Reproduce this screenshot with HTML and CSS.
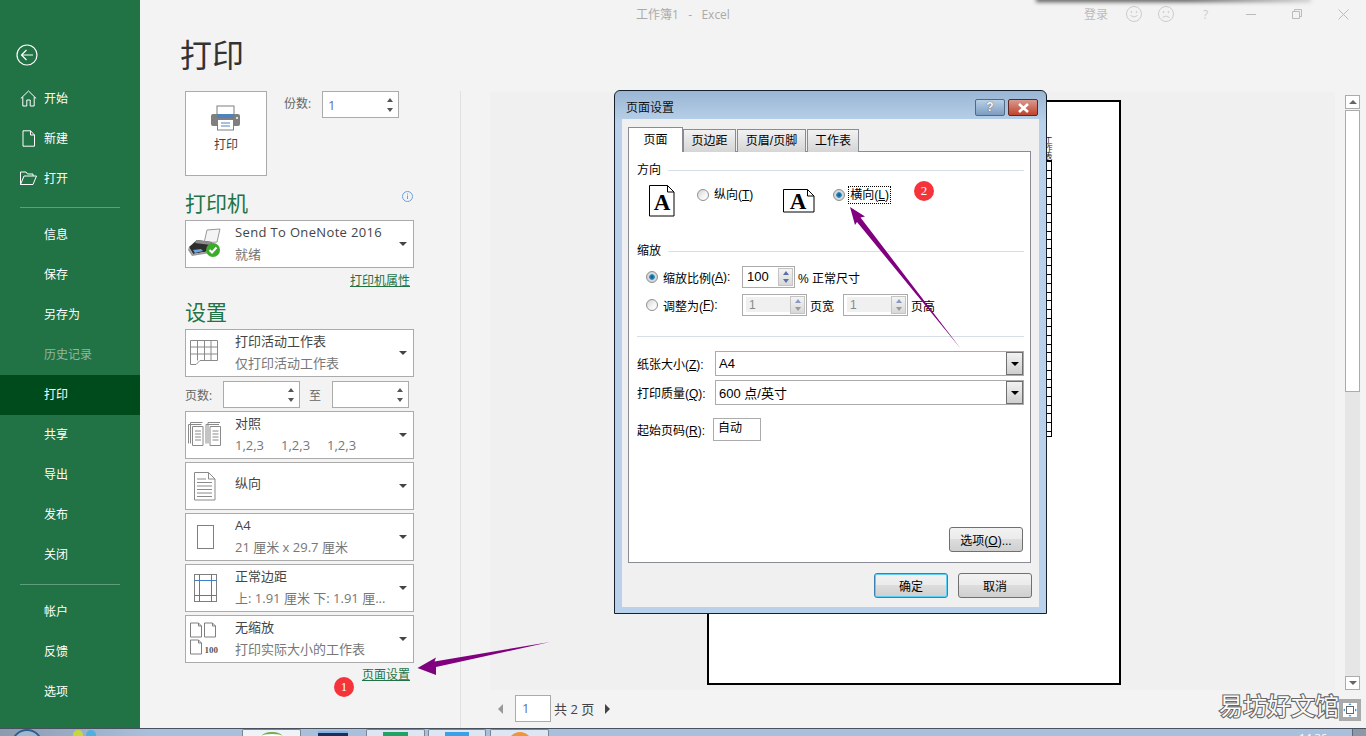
FILE: index.html
```html
<!DOCTYPE html>
<html lang="zh-CN">
<head>
<meta charset="UTF-8">
<title>工作簿1 - Excel</title>
<link rel="stylesheet" href="styles.css">
</head>
<body>
<div id="app">
    <nav class="sidebar">
        <div class="back">
            <svg width="24" height="24" viewBox="0 0 24 24" fill="none" stroke="#fff" stroke-width="1.2"><circle cx="12" cy="12" r="10"/><path d="M18 12H6.500M11.500 7l-5 5 5 5"/></svg>
        </div>
        <a class="nav-item">
            <svg class="nav-icon" width="17" height="17" viewBox="0 0 17 17" fill="none" stroke="#fff" stroke-width="1"><path d="M.8 8.500L8.500 1l7.700 7.500M2.800 7v9h4v-6h3.400v6h4V7"/></svg>
            开始
        </a>
        <a class="nav-item">
            <svg class="nav-icon" width="17" height="17" viewBox="0 0 17 17" fill="none" stroke="#fff" stroke-width="1"><path d="M3 .8h7.500L14.500 5v11.200H3zM10.500 .8V5h4"/></svg>
            新建
        </a>
        <a class="nav-item">
            <svg class="nav-icon" width="17" height="17" viewBox="0 0 17 17" fill="none" stroke="#fff" stroke-width="1"><path d="M.5 14.500V2h5.500l1.500 2h5.500v2M.5 14.500L4 6h12.500L13 14.500z"/></svg>
            打开
        </a>
        <div class="nav-line nav-line-first"></div>
        <a class="nav-item">信息</a>
        <a class="nav-item">保存</a>
        <a class="nav-item">另存为</a>
        <a class="nav-item nav-off">历史记录</a>
        <a class="nav-item nav-on">打印</a>
        <a class="nav-item">共享</a>
        <a class="nav-item">导出</a>
        <a class="nav-item">发布</a>
        <a class="nav-item">关闭</a>
        <div class="nav-line nav-line-second"></div>
        <a class="nav-item">帐户</a>
        <a class="nav-item">反馈</a>
        <a class="nav-item">选项</a>
    </nav>

    <main class="main">
        <header class="titlebar">
            <span class="app-title">工作簿1&nbsp;&nbsp; - &nbsp;&nbsp;Excel</span>
            <span class="login">登录</span>
            <svg class="tb-smile" width="16" height="16" viewBox="0 0 16 16" fill="none" stroke="#ccc"><circle cx="8" cy="8" r="7.500"/><circle cx="5.500" cy="6" r=".6"/><circle cx="10.500" cy="6" r=".6"/><path d="M4.500 9.500q3.500 3 7 0"/></svg>
            <svg class="tb-sad" width="16" height="16" viewBox="0 0 16 16" fill="none" stroke="#ccc"><circle cx="8" cy="8" r="7.500"/><circle cx="5.500" cy="6" r=".6"/><circle cx="10.500" cy="6" r=".6"/><path d="M4.500 11.500q3.500-3 7 0"/></svg>
            <span class="tb-help">?</span>
            <svg class="tb-min" width="10" height="10" viewBox="0 0 10 10" stroke="#bbb"><path d="M0 5.500h10"/></svg>
            <svg class="tb-restore" width="10" height="10" viewBox="0 0 10 10" fill="none" stroke="#bbb"><path d="M.5 2.500h7v7h-7zM2.500 2.500v-2h7v7h-2"/></svg>
            <svg class="tb-close" width="11" height="11" viewBox="0 0 11 11" stroke="#bbb"><path d="M.5 .5l10 10M10.500 .5l-10 10"/></svg>
        </header>
        <h1 class="page-title">打印</h1>

        <div class="content">
            <section class="settings">
                <div class="print-row">
                    <button class="print-btn">
                        <svg width="30" height="26" viewBox="0 0 30 26"><rect x="6" y="1" width="17" height="10" fill="#fff" stroke="#7f7f7f"/><rect x="0" y="9" width="29" height="12" rx="2" fill="#7f7f7f"/><rect x="6" y="9" width="17" height="4" fill="#4f81bd"/><circle cx="26" cy="13" r="1" fill="#fff"/><rect x="6.500" y="14.500" width="16" height="10.500" fill="#fff" stroke="#7f7f7f"/><path d="M10 18h9M10 21h9" stroke="#4f81bd"/></svg>
                        <span>打印</span>
                    </button>
                    <span class="copies-label">份数:</span>
                    <div class="num-input copies"><span class="num-value">1</span><span class="num-arrows"><i class="up"></i><i class="down"></i></span></div>
                </div>

                <div class="heading heading-printer">
                    <span>打印机</span>
                    <svg class="info" width="11" height="11" viewBox="0 0 11 11" fill="none" stroke="#6f9fd8"><circle cx="5.500" cy="5.500" r="5"/><path d="M5.500 4.500v3.500M5.500 2.500v1"/></svg>
                </div>
                <div class="drop">
                    <div class="drop-icon">
                        <svg width="34" height="34" viewBox="0 0 34 34"><path d="M19 3l13-1-3 13-13 1z" fill="#f4f4f4" stroke="#999"/><path d="M1 20l8-7 15 2-2 9-17 3z" fill="#2e2e2e"/><path d="M9 13l15 2-1 3-16-2z" fill="#8c8c8c"/><path d="M1 20l4 7 17-3 0 2-18 3-4-6z" fill="#9a9a9a"/><path d="M5 23l8-1 2 2-8 2z" fill="#6aa7de"/><circle cx="25" cy="23" r="7" fill="#3cab2c"/><path d="M21.500 23l2.500 2.500 4.500-5" fill="none" stroke="#fff" stroke-width="2"/></svg>
                    </div>
                    <div class="drop-text"><div class="drop-main drop-latin">Send To OneNote 2016</div><div class="drop-sub">就绪</div></div>
                    <i class="caret"></i>
                </div>
                <div class="link-row link-printer"><a>打印机属性</a></div>

                <div class="heading heading-settings"><span>设置</span></div>
                <div class="drop">
                    <div class="drop-icon">
                        <svg width="30" height="26" viewBox="0 0 30 26" fill="none" stroke="#8a8a8a"><path d="M.5 .5h27v20H10l-4 4H.5zM.5 7h27M.5 14h27M7.500 .5v20M14.500 .5v20M21 .5v20"/></svg>
                    </div>
                    <div class="drop-text"><div class="drop-main">打印活动工作表</div><div class="drop-sub">仅打印活动工作表</div></div>
                    <i class="caret"></i>
                </div>
                <div class="pages-row">
                    <span class="pages-label">页数:</span>
                    <div class="num-input"><span class="num-arrows"><i class="up"></i><i class="down"></i></span></div>
                    <span class="pages-to">至</span>
                    <div class="num-input"><span class="num-arrows"><i class="up"></i><i class="down"></i></span></div>
                </div>
                <div class="drop drop-gap">
                    <div class="drop-icon">
                        <svg width="34" height="26" viewBox="0 0 34 26" fill="none" stroke="#8a8a8a"><path d="M.5 2.500h13M.5 2.500v19M2.500 .5h12M2.500 .5v21M4.500 4.500h10.500v19H4.500zM7 9h6M7 12h6M7 15h6M7 18h6"/><path d="M18 2.500h13M18 2.500v19M20 .5h12M20 .5v21M22 4.500h10.500v19H22zM24.500 9h6M24.500 12h6M24.500 15h6M24.500 18h6"/></svg>
                    </div>
                    <div class="drop-text"><div class="drop-main">对照</div><div class="drop-sub collate"><span>1,2,3</span><span>1,2,3</span><span>1,2,3</span></div></div>
                    <i class="caret"></i>
                </div>
                <div class="drop drop-gap">
                    <div class="drop-icon">
                        <svg width="22" height="29" viewBox="0 0 22 29" fill="none" stroke="#8a8a8a"><path d="M.5 .5h14l6.500 6.500v21H.5zM14.500 .5V7H21M3 7h9M3 10.500h15M3 14h15M3 17.500h15M3 21h15M3 24.500h15"/></svg>
                    </div>
                    <div class="drop-text"><div class="drop-main drop-single">纵向</div></div>
                    <i class="caret"></i>
                </div>
                <div class="drop drop-gap">
                    <div class="drop-icon">
                        <svg width="17" height="24" viewBox="0 0 17 24" fill="none" stroke="#7f7f7f"><rect x=".5" y=".5" width="16" height="23"/></svg>
                    </div>
                    <div class="drop-text"><div class="drop-main">A4</div><div class="drop-sub">21 厘米 x 29.7 厘米</div></div>
                    <i class="caret"></i>
                </div>
                <div class="drop drop-gap">
                    <div class="drop-icon">
                        <svg width="23" height="28" viewBox="0 0 23 28" fill="none"><rect x=".5" y=".5" width="22" height="27" stroke="#7f7f7f"/><path d="M5.500 .5v27M17.500 .5v27M.5 6.500h22M.5 21.500h22" stroke="#3f7fc4"/></svg>
                    </div>
                    <div class="drop-text"><div class="drop-main">正常边距</div><div class="drop-sub">上: 1.91 厘米 下: 1.91 厘...</div></div>
                    <i class="caret"></i>
                </div>
                <div class="drop drop-gap">
                    <div class="drop-icon">
                        <svg width="30" height="34" viewBox="0 0 30 34" fill="none" stroke="#7f7f7f"><path d="M.5 1h8l3 3v11H.5zM8.500 1v3h3M14.500 1h8l3 3v11h-11zM22.500 1v3h3M.5 18h8l3 3v11H.5zM8.500 18v3h3"/><text x="14.500" y="31" class="icon-100">100</text></svg>
                    </div>
                    <div class="drop-text"><div class="drop-main">无缩放</div><div class="drop-sub">打印实际大小的工作表</div></div>
                    <i class="caret"></i>
                </div>
                <div class="link-row link-setup"><a>页面设置</a></div>
            </section>

            <section class="preview">
                <div class="preview-top">
                    <div class="stage">
                        <div class="sheet">
                            <div class="sheet-head">工作表</div>
                            <div class="sheet-table"></div>
                        </div>
                    </div>
                    <div class="scrollbar">
                        <div class="sb-btn"><i class="sb-up"></i></div>
                        <div class="sb-thumb"></div>
                        <div class="sb-track"></div>
                        <div class="sb-btn"><i class="sb-down"></i></div>
                    </div>
                </div>
                <div class="pager">
                    <i class="pg-prev"></i>
                    <div class="pg-input">1</div>
                    <span class="pg-text">共 2 页</span>
                    <i class="pg-next"></i>
                </div>
            </section>
        </div>
    </main>
</div>

<footer class="taskbar">
    <div class="orb"></div>
    <div class="quick quick-a"></div>
    <div class="quick quick-b"></div>
    <div class="task task-a"><span class="chip chip-white"></span></div>
    <div class="chip-blue"></div>
    <div class="task task-b"><span class="chip chip-green"></span></div>
    <div class="task task-c"><span class="chip chip-sky"></span></div>
    <div class="task task-d"><span class="chip chip-orange"></span></div>
    <div class="clock">14:36</div>
    <div class="show-desktop"></div>
</footer>

<div class="dialog">
    <div class="dlg-title">
        <span>页面设置</span>
        <div class="dlg-btns">
            <span class="dlg-help">?</span>
            <span class="dlg-close"><svg width="13" height="10" viewBox="0 0 13 10"><path d="M2 1l9 8M11 1l-9 8" stroke="#fff" stroke-width="2.600"/></svg></span>
        </div>
    </div>
    <div class="dlg-client">
        <div class="tabs">
            <span class="tab tab-on">页面</span>
            <span class="tab tab-margin">页边距</span>
            <span class="tab tab-header">页眉/页脚</span>
            <span class="tab tab-sheet">工作表</span>
        </div>
        <div class="pane">
            <div class="sec-head sec-orient"><span>方向</span></div>
            <div class="orient-row">
                <svg class="doc-portrait" width="26" height="32" viewBox="0 0 26 32"><path d="M.5 .5h18l6.500 6.500v24H.5zM18.500 .5V7H25" fill="#fff" stroke="#000"/><text x="13" y="25" class="doc-a">A</text></svg>
                <span class="radio radio-first"></span>
                <span class="radio-text">纵向(<u>T</u>)</span>
                <svg class="doc-landscape" width="32" height="24" viewBox="0 0 32 24"><path d="M.5 .5h24l6.500 6.500v16H.5zM24.500 .5V7H31" fill="#fff" stroke="#000"/><text x="15" y="20" class="doc-a">A</text></svg>
                <span class="radio radio-on radio-second"></span>
                <span class="radio-text radio-focus">横向(<u>L</u>)</span>
            </div>
            <div class="sec-head sec-scale"><span>缩放</span></div>
            <div class="scale-row scale-first">
                <label class="scale-label"><span class="radio radio-on"></span>缩放比例(<u>A</u>):</label>
                <div class="spin spin-main"><span class="spin-val">100</span><span class="spin-btns"><i class="up"></i><i class="down"></i></span></div>
                <span class="scale-after">% 正常尺寸</span>
            </div>
            <div class="scale-row scale-second">
                <label class="scale-label"><span class="radio"></span>调整为(<u>F</u>):</label>
                <div class="spin spin-off"><span class="spin-val">1</span><span class="spin-btns"><i class="up"></i><i class="down"></i></span></div>
                <span class="scale-unit">页宽</span>
                <div class="spin spin-off"><span class="spin-val">1</span><span class="spin-btns"><i class="up"></i><i class="down"></i></span></div>
                <span class="scale-unit">页高</span>
            </div>
            <div class="pane-line"></div>
            <div class="select-row select-first">
                <span class="select-label">纸张大小(<u>Z</u>):</span>
                <div class="select"><span>A4</span><span class="select-btn"><i></i></span></div>
            </div>
            <div class="select-row select-second">
                <span class="select-label">打印质量(<u>Q</u>):</span>
                <div class="select"><span>600 点/英寸</span><span class="select-btn"><i></i></span></div>
            </div>
            <div class="start-row">
                <span class="start-label">起始页码(<u>R</u>):</span>
                <div class="start-input">自动</div>
            </div>
            <div class="options-row"><button class="dlg-btn options-btn">选项(<u>O</u>)...</button></div>
        </div>
        <div class="dlg-footer">
            <button class="dlg-btn btn-default">确定</button>
            <button class="dlg-btn">取消</button>
        </div>
    </div>
</div>

<svg class="annotations" width="1366" height="736" viewBox="0 0 1366 736">
    <path d="M417.500 668L436 657.500 434.500 661.500 550 642 436 667 436 675z" fill="#800080"/>
    <path d="M850 207L865 216.500 860.500 217.500 961 349 857 222 855 225z" fill="#800080"/>
</svg>
<span class="badge badge-one">1</span>
<span class="badge badge-two">2</span>
<div class="top-shadow"></div>
<div class="watermark">易坊好文馆</div>
<div class="fit-btn">
    <svg width="14" height="14" viewBox="0 0 14 14" fill="none"><rect x="3.500" y="3.500" width="7" height="7" stroke="#666"/><path d="M7 0l1.500 2h-3zM7 14l1.500-2h-3zM0 7l2-1.500v3zM14 7l-2-1.500v3z" fill="#4a90d9"/></svg>
</div>
</body>
</html>
```

FILE: styles.css
```css
* {
    box-sizing: border-box;
}

html,
body {
    margin: 0;
    padding: 0;
}

body {
    position: relative;
    width: 1366px;
    height: 736px;
    overflow: hidden;
    background-color: #f3f3f3;
    font-family: "Open Sans", "Noto Sans CJK SC", sans-serif;
    font-size: 12px;
    color: #444;
}

i {
    display: block;
}

#app {
    display: flex;
    height: 728px;
}

/* left green menu */
.sidebar {
    width: 140px;
    flex-shrink: 0;
    background-color: #217346;
    color: #fff;
    padding-top: 35px;
}

.back {
    height: 40px;
    margin-bottom: 4px;
    padding: 8px 0 0 15px;
}

.nav-item {
    display: flex;
    align-items: center;
    height: 40px;
    padding-left: 44px;
    position: relative;
    line-height: 1;
}

.nav-icon {
    position: absolute;
    left: 20px;
    top: 11px;
}

.nav-off {
    color: #8fb8a2;
}

.nav-on {
    background-color: #004b1c;
}

.nav-line {
    height: 1px;
    margin-left: 20px;
    width: 100px;
    background-color: #5f9e7c;
}

.nav-line-first {
    margin-top: 8px;
    margin-bottom: 7px;
}

.nav-line-second {
    margin-top: 9px;
    margin-bottom: 7px;
}

/* main area */
.main {
    flex: 1;
    display: flex;
    flex-direction: column;
    min-width: 0;
}

.titlebar {
    display: flex;
    align-items: center;
    height: 28px;
    padding-left: 496px;
    color: #b0b0b0;
    flex-shrink: 0;
}

.app-title {
    width: 308px;
    color: #aaa;
    flex-shrink: 0;
}

.login {
    padding-left: 140px;
    width: 182px;
    color: #bbb;
    flex-shrink: 0;
}

.tb-smile {
    flex-shrink: 0;
}

.tb-sad {
    margin-left: 16px;
    flex-shrink: 0;
}

.tb-help {
    margin-left: 29px;
    width: 8px;
    color: #ccc;
}

.tb-min {
    margin-left: 35px;
    flex-shrink: 0;
}

.tb-restore {
    margin-left: 36px;
    flex-shrink: 0;
}

.tb-close {
    margin-left: 36px;
    flex-shrink: 0;
}

.page-title {
    margin: 0 0 0 40px;
    height: 63px;
    font-size: 32px;
    font-weight: 400;
    line-height: 54px;
    color: #333;
}

.content {
    flex: 1;
    display: flex;
    min-height: 0;
}

.settings {
    width: 321px;
    flex-shrink: 0;
    padding-left: 45px;
    padding-right: 46px;
    border-right: 1px solid #e1e1e1;
}

.print-row {
    display: flex;
    align-items: flex-start;
    height: 85px;
}

.print-btn {
    width: 82px;
    height: 85px;
    padding: 13px 0 0;
    border: 1px solid #ababab;
    background-color: #fff;
    display: flex;
    flex-direction: column;
    align-items: center;
    font-family: inherit;
    font-size: 12px;
    color: #444;
}

.print-btn span {
    margin-top: 4px;
}

.copies-label {
    margin-left: 17px;
    width: 38px;
    line-height: 26px;
    color: #666;
}

.num-input {
    position: relative;
    width: 77px;
    height: 27px;
    border: 1px solid #ababab;
    background-color: #fff;
    display: flex;
    align-items: center;
    justify-content: space-between;
}

.num-value {
    padding-left: 5px;
    font-size: 13px;
    color: #5b6fae;
}

.num-arrows {
    display: flex;
    flex-direction: column;
    gap: 6px;
    margin-left: auto;
    margin-right: 5px;
}

.num-arrows .up,
.spin-btns .up {
    width: 0;
    height: 0;
    border-left: 3px solid transparent;
    border-right: 3px solid transparent;
    border-bottom: 4px solid #555;
}

.num-arrows .down,
.spin-btns .down {
    width: 0;
    height: 0;
    border-left: 3px solid transparent;
    border-right: 3px solid transparent;
    border-top: 4px solid #555;
}

.heading {
    position: relative;
    height: 26px;
    font-size: 21px;
    line-height: 24px;
    color: #217346;
}

.heading-printer {
    margin-top: 15px;
    margin-bottom: 3px;
}

.heading-settings {
    margin-top: 12px;
    margin-bottom: 3px;
}

.info {
    position: absolute;
    right: 1px;
    top: 0;
}

.drop {
    display: flex;
    align-items: center;
    height: 48px;
    border: 1px solid #ababab;
    background-color: #fff;
}

.drop-gap {
    margin-top: 3px;
}

.drop-icon {
    width: 49px;
    flex-shrink: 0;
    display: flex;
    justify-content: center;
    align-items: center;
    padding-right: 11px;
}

.drop-icon svg {
    flex-shrink: 0;
}

.drop-text {
    flex: 1;
    min-width: 0;
    height: 46px;
    white-space: nowrap;
    overflow: hidden;
}

.drop-main {
    height: 22px;
    font-size: 13px;
    line-height: 22px;
    color: #444;
}

.drop-latin {
    letter-spacing: .35px;
}

.drop-single {
    height: 46px;
    line-height: 40px;
}

.drop-sub {
    height: 22px;
    font-size: 13px;
    line-height: 22px;
    color: #777;
}

.collate {
    display: flex;
    gap: 17px;
}

.caret {
    width: 0;
    height: 0;
    margin-right: 6px;
    border-left: 4px solid transparent;
    border-right: 4px solid transparent;
    border-top: 4px solid #444;
    flex-shrink: 0;
}

.link-row {
    display: flex;
    justify-content: flex-end;
    padding-right: 4px;
    height: 14px;
    line-height: 14px;
}

.link-row a {
    color: #217346;
    text-decoration: underline;
}

.link-printer {
    margin-top: 6px;
}

.link-setup {
    margin-top: 5px;
}

.pages-row {
    display: flex;
    align-items: center;
    height: 27px;
    margin-top: 4px;
    width: 225px;
}

.pages-label {
    width: 38px;
    color: #666;
}

.pages-to {
    width: 32px;
    padding-left: 9px;
    color: #666;
}

.icon-100 {
    font-family: "Liberation Serif", serif;
    font-size: 9px;
    font-weight: bold;
    fill: #555;
    stroke: none;
}

/* preview */
.preview {
    flex: 1;
    padding-left: 29px;
    min-width: 0;
}

.preview-top {
    display: flex;
    height: 598px;
    margin-top: 1px;
}

.stage {
    width: 845px;
    height: 598px;
    background-color: #f0f0f0;
    padding: 8px 0 0 217px;
}

.sheet {
    width: 414px;
    height: 585px;
    background-color: #fff;
    border: 2px solid #000;
}

.sheet-head {
    height: 58px;
    width: 343px;
    padding: 33px 0 0 0;
    text-align: right;
    font-size: 8px;
    line-height: 8px;
    writing-mode: vertical-rl;
    color: #222;
}

.sheet-table {
    width: 343px;
    height: 277px;
    border: 1px solid #000;
    background-image: repeating-linear-gradient(to bottom, #000 0, #000 1px, #fff 1px, #fff 8.700px);
}

.scrollbar {
    width: 15px;
    margin-left: 10px;
    margin-top: 3px;
    height: 595px;
    display: flex;
    flex-direction: column;
}

.sb-btn {
    height: 14px;
    background-color: #fff;
    border: 1px solid #ababab;
    display: flex;
    align-items: center;
    justify-content: center;
    flex-shrink: 0;
}

.sb-up {
    border-left: 4px solid transparent;
    border-right: 4px solid transparent;
    border-bottom: 4px solid #666;
}

.sb-down {
    border-left: 4px solid transparent;
    border-right: 4px solid transparent;
    border-top: 4px solid #666;
}

.sb-thumb {
    height: 282px;
    margin-top: 1px;
    background-color: #fff;
    border: 1px solid #ababab;
}

.sb-track {
    flex: 1;
    background-color: #e6e6e6;
}

.pager {
    display: flex;
    align-items: center;
    height: 27px;
    margin-top: 5px;
    padding-left: 8px;
}

.pg-prev {
    border-top: 5px solid transparent;
    border-bottom: 5px solid transparent;
    border-right: 5px solid #999;
}

.pg-input {
    width: 36px;
    height: 27px;
    margin-left: 12px;
    padding-left: 6px;
    border: 1px solid #ababab;
    background-color: #fff;
    font-size: 13px;
    line-height: 25px;
    color: #5b6fae;
}

.pg-text {
    margin-left: 3px;
    width: 51px;
    font-size: 13px;
    color: #444;
}

.pg-next {
    border-top: 5px solid transparent;
    border-bottom: 5px solid transparent;
    border-left: 5px solid #444;
}

/* windows taskbar, only its top edge is in the picture */
.taskbar {
    position: relative;
    display: flex;
    height: 8px;
    overflow: hidden;
    border-top: 1px solid #47505c;
    background: linear-gradient(to right, #8a9bb0 0, #a9c0dc 150px, #a9c0dc 100%);
}

.orb {
    width: 32px;
    height: 32px;
    margin-left: 11px;
    border: 2px solid #2b5f8f;
    border-radius: 50%;
    background-color: #9fb8d0;
    flex-shrink: 0;
}

.quick {
    width: 10px;
    height: 10px;
    margin-top: 1px;
    border-radius: 50%;
    flex-shrink: 0;
}

.quick-a {
    margin-left: 30px;
    background-color: #c6d83a;
}

.quick-b {
    margin-left: 3px;
    background-color: #4fb0e0;
}

.task {
    height: 8px;
    border: 1px solid #7a8694;
    border-bottom: none;
    background-color: #dce7f3;
    display: flex;
    justify-content: center;
    flex-shrink: 0;
    border-radius: 2px 2px 0 0;
}

.task-a {
    width: 59px;
    margin-left: 146px;
    background-color: #eef3f8;
}

.chip {
    display: block;
    height: 8px;
    margin-top: 2px;
}

.chip-white {
    width: 20px;
    background-color: #fff;
    border-top: 2px solid #6ab04c;
    border-radius: 50% 50% 0 0;
}

.chip-blue {
    width: 30px;
    height: 8px;
    margin: 2px 18px 0 17px;
    background-color: #1c2e5a;
    border-top: 2px solid #7fb2e5;
    flex-shrink: 0;
}

.task-b {
    width: 59px;
}

.chip-green {
    width: 25px;
    background-color: #21a366;
}

.task-c {
    width: 58px;
    margin-left: 3px;
}

.chip-sky {
    width: 24px;
    background-color: #3aa0e8;
}

.task-d {
    width: 59px;
    margin-left: 4px;
}

.chip-orange {
    width: 24px;
    height: 24px;
    background-color: #f0953c;
    border-radius: 50%;
}

.clock {
    margin-left: 750px;
    margin-top: 1px;
    width: 40px;
    line-height: 16px;
    color: #fff;
    font-size: 11px;
    flex-shrink: 0;
}

.show-desktop {
    width: 14px;
    margin-left: auto;
    background-color: #8c98a8;
    border-left: 1px solid #5c6875;
    flex-shrink: 0;
}

/* page setup dialog */
.dialog {
    position: absolute;
    left: 614px;
    top: 90px;
    width: 433px;
    height: 524px;
    padding: 0 7px 6px;
    border: 1px solid #15202b;
    border-radius: 6px 6px 0 0;
    background: linear-gradient(to bottom, #9ab6d4 0, #b9d1ea 32px, #b9d1ea 100%);
    display: flex;
    flex-direction: column;
    font-family: "Liberation Sans", "Noto Sans CJK SC", sans-serif;
    color: #000;
}

.dlg-title {
    display: flex;
    justify-content: space-between;
    height: 28px;
    padding: 9px 1px 0 4px;
    line-height: 17px;
    color: #111;
    flex-shrink: 0;
}

.dlg-btns {
    display: flex;
    gap: 3px;
    margin-top: -1px;
}

.dlg-help {
    width: 30px;
    height: 17px;
    text-align: center;
    font-weight: bold;
    color: #fff;
    background: linear-gradient(to bottom, #b9cfe5, #7c9dc0);
    border: 1px solid #4d6a86;
    border-radius: 2px;
    line-height: 15px;
    text-shadow: 0 0 1px #223;
}

.dlg-close {
    width: 30px;
    height: 17px;
    display: flex;
    align-items: center;
    justify-content: center;
    background: linear-gradient(to bottom, #d99a90, #c0432c);
    border: 1px solid #5c2a24;
    border-radius: 2px;
}

.dlg-client {
    flex: 1;
    background-color: #f0f0f0;
    padding: 8px 0 0 6px;
    display: flex;
    flex-direction: column;
    min-height: 0;
}

.tabs {
    display: flex;
    align-items: flex-end;
    height: 25px;
    position: relative;
    z-index: 1;
    margin-bottom: -1px;
}

.tab {
    height: 23px;
    text-align: center;
    line-height: 22px;
    border: 1px solid #898c95;
    border-bottom: none;
    background: linear-gradient(to bottom, #f2f2f2, #d5d5d5);
    margin-left: 1px;
}

.tab-on {
    width: 55px;
    height: 25px;
    margin-left: 0;
    background: #fff;
    line-height: 24px;
}

.tab-margin {
    width: 53px;
    margin-left: 0;
}

.tab-header {
    width: 69px;
}

.tab-sheet {
    width: 52px;
}

.pane {
    width: 403px;
    height: 412px;
    flex-shrink: 0;
    border: 1px solid #898c95;
    background-color: #fff;
    padding: 0 6px 0 8px;
    display: flex;
    flex-direction: column;
}

.sec-head {
    display: flex;
    align-items: center;
    gap: 7px;
    height: 14px;
    line-height: 14px;
    flex-shrink: 0;
}

.sec-head::after {
    content: "";
    flex: 1;
    height: 1px;
    background-color: #d5dfe5;
}

.sec-orient {
    margin-top: 11px;
}

.sec-scale {
    margin-top: 27px;
}

.orient-row {
    display: flex;
    align-items: flex-start;
    height: 33px;
    margin-top: 7px;
}

.doc-portrait {
    margin: 1px 0 0 12px;
    flex-shrink: 0;
}

.doc-landscape {
    margin: 5px 0 0 30px;
    flex-shrink: 0;
}

.doc-a {
    font-family: "Liberation Serif", serif;
    font-size: 23px;
    font-weight: bold;
    text-anchor: middle;
    fill: #000;
    stroke: none;
}

.radio {
    display: inline-block;
    width: 12px;
    height: 12px;
    flex-shrink: 0;
    border: 1px solid #8e8f8f;
    border-radius: 50%;
    background: linear-gradient(135deg, #d2d2d2 0, #f4f4f4 55%, #fff 100%);
}

.radio-on {
    background: radial-gradient(circle, #0d4f80 0, #2a8fc8 35%, #dcdcdc 45%, #c8c8c8 100%);
}

.orient-row .radio {
    margin-top: 5px;
}

.orient-row .radio-first {
    margin-left: 22px;
}

.orient-row .radio-second {
    margin-left: 18px;
}

.radio-text {
    margin-left: 5px;
    line-height: 20px;
    margin-top: 1px;
    white-space: nowrap;
}

.radio-focus {
    margin-left: 3px;
    margin-top: 2px;
    padding: 0 1px;
    border: 1px dotted #000;
    height: 18px;
    line-height: 16px;
}

.scale-row {
    display: flex;
    align-items: center;
    height: 22px;
    flex-shrink: 0;
}

.scale-first {
    margin-top: 8px;
}

.scale-second {
    margin-top: 6px;
}

.scale-label {
    display: flex;
    align-items: center;
    width: 105px;
    padding-left: 9px;
    white-space: nowrap;
}

.scale-label .radio {
    margin-right: 5px;
}

.spin {
    display: flex;
    height: 22px;
    border: 1px solid #ababab;
    background-color: #fff;
    padding: 1px;
    justify-content: space-between;
}

.spin-main {
    width: 53px;
    font-size: 13px;
}

.spin-off {
    width: 65px;
}

.spin-val {
    flex: 1;
    padding-left: 3px;
    line-height: 17px;
}

.spin-off .spin-val {
    background-color: #f0f0f0;
    color: #888;
    margin: 1px 0 2px 2px;
}

.spin-btns {
    width: 15px;
    flex-shrink: 0;
    display: flex;
    flex-direction: column;
    align-items: center;
    justify-content: space-around;
    background: linear-gradient(to bottom, #f4f4f4, #d8d8d8);
    border: 1px solid #c4c4c4;
}

.spin-main .spin-btns .up,
.spin-main .spin-btns .down {
    border-bottom-color: #5a70a8;
    border-top-color: #5a70a8;
}

.spin-off .spin-btns .up,
.spin-off .spin-btns .down {
    border-bottom-color: #8a9ac0;
    border-top-color: #999;
}

.scale-after {
    margin-left: 3px;
}

.scale-unit {
    width: 36px;
    padding-left: 3px;
}

.pane-line {
    height: 1px;
    margin-top: 20px;
    background-color: #d5dfe5;
    flex-shrink: 0;
}

.select-row {
    display: flex;
    align-items: center;
    height: 25px;
    flex-shrink: 0;
}

.select-first {
    margin-top: 14px;
}

.select-second {
    margin-top: 4px;
}

.select-label {
    width: 78px;
    flex-shrink: 0;
}

.select {
    flex: 1;
    height: 25px;
    border: 1px solid #ababab;
    background-color: #fff;
    display: flex;
    align-items: center;
    justify-content: space-between;
    padding-left: 3px;
    font-size: 13px;
}

.select-btn {
    width: 17px;
    height: 23px;
    background: linear-gradient(to bottom, #f2f2f2, #cfcfcf);
    border: 1px solid #707070;
    display: flex;
    align-items: center;
    justify-content: center;
}

.select-btn i {
    border-left: 4px solid transparent;
    border-right: 4px solid transparent;
    border-top: 4px solid #000;
}

.start-row {
    display: flex;
    align-items: center;
    height: 23px;
    margin-top: 13px;
    flex-shrink: 0;
}

.start-label {
    width: 76px;
    flex-shrink: 0;
}

.start-input {
    width: 48px;
    height: 23px;
    border: 1px solid #ababab;
    padding-left: 4px;
    line-height: 19px;
}

.options-row {
    display: flex;
    justify-content: flex-end;
    margin-top: auto;
    margin-bottom: 10px;
    margin-right: 1px;
}

.dlg-btn {
    width: 74px;
    height: 25px;
    padding: 0;
    border: 1px solid #707070;
    border-radius: 3px;
    background: linear-gradient(to bottom, #f2f2f2 0, #ebebeb 48%, #dddddd 50%, #cfcfcf 100%);
    font-family: inherit;
    font-size: 12px;
    color: #000;
}

.btn-default {
    border-color: #3c7fb1;
    box-shadow: inset 0 0 0 1px #5fd0f5;
}

.dlg-footer {
    display: flex;
    justify-content: flex-end;
    gap: 10px;
    padding-right: 7px;
    margin-top: 10px;
}

/* things drawn over the screenshot */
.annotations {
    position: absolute;
    left: 0;
    top: 0;
    pointer-events: none;
}

.badge {
    position: absolute;
    width: 20px;
    height: 20px;
    border-radius: 50%;
    background-color: #f5333a;
    color: #fff;
    text-align: center;
    font-family: "Liberation Serif", serif;
    font-size: 13px;
    line-height: 20px;
}

.badge-one {
    left: 334px;
    top: 677px;
}

.badge-two {
    left: 914px;
    top: 181px;
}

.top-shadow {
    position: absolute;
    left: 1036px;
    top: -3px;
    width: 275px;
    height: 5px;
    background: linear-gradient(to right, #555 0, #555 55%, #ccc 100%);
    filter: blur(2px);
}

.watermark {
    position: absolute;
    left: 1219px;
    top: 690px;
    font-family: "Noto Sans CJK SC", sans-serif;
    font-size: 24px;
    line-height: 30px;
    white-space: nowrap;
    color: #fafafa;
    -webkit-text-stroke: 2.200px #666;
    paint-order: stroke fill;
}

.fit-btn {
    position: absolute;
    left: 1339px;
    top: 699px;
    width: 22px;
    height: 22px;
    background-color: #aaa;
    padding: 4px;
    display: flex;
    align-items: center;
    justify-content: center;
}

.fit-btn svg {
    background-color: #fff;
    flex-shrink: 0;
}
```
